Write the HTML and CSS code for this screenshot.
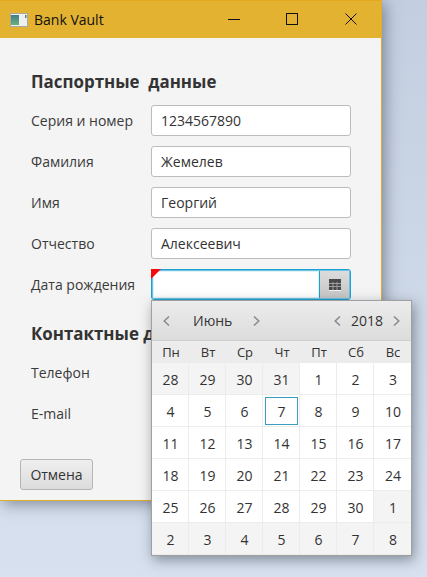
FILE: index.html
```html
<!DOCTYPE html>
<html lang="ru">
<head>
<meta charset="utf-8">
<title>Bank Vault</title>
<link rel="stylesheet" href="styles.css">
</head>
<body>
<div class="window">
  <header class="titlebar">
    <svg class="app-icon" width="18" height="14" viewBox="0 0 18 14">
      <defs><linearGradient id="g" x1="0" y1="0" x2="0" y2="1"><stop offset="0" stop-color="#3f7f86"/><stop offset="1" stop-color="#6fae7a"/></linearGradient></defs>
      <rect x="0.5" y="0.5" width="17" height="13" fill="#eef0f0" stroke="#a9a9a0"/>
      <rect x="1" y="2" width="8" height="10" fill="url(#g)"/>
      <rect x="15" y="2" width="1.5" height="3" fill="#5d7f8a"/>
    </svg>
    <span class="title">Bank Vault</span>
    <div class="controls">
      <svg width="12" height="12" viewBox="0 0 12 12"><path d="M0 6.5H12" stroke="#111" fill="none"/></svg>
      <svg width="12" height="12" viewBox="0 0 12 12"><rect x="0.5" y="0.5" width="11" height="11" stroke="#111" fill="none"/></svg>
      <svg class="close" width="12" height="12" viewBox="0 0 12 12"><path d="M0.5 0.5L11.5 11.5M11.5 0.5L0.5 11.5" stroke="#111" fill="none"/></svg>
    </div>
  </header>
  <main class="content">
    <h2 class="heading first">Паспортные&nbsp; данные</h2>
    <div class="row"><label class="lbl">Серия и номер</label><div class="input">1234567890</div></div>
    <div class="row"><label class="lbl">Фамилия</label><div class="input">Жемелев</div></div>
    <div class="row"><label class="lbl">Имя</label><div class="input">Георгий</div></div>
    <div class="row"><label class="lbl">Отчество</label><div class="input">Алексеевич</div></div>
    <div class="row">
      <label class="lbl">Дата рождения</label>
      <div class="date">
        <div class="date-input"><span class="flag"></span></div>
        <div class="date-btn">
          <svg width="12" height="12" viewBox="0 0 12 12"><rect width="12" height="11" fill="#4a4a4a"/><path d="M0 4.5H12M0 7.5H12M4 3V11M8 3V11" stroke="#9c9c9c" fill="none"/><rect y="11" width="12" height="1" fill="#f4f4f4"/></svg>
        </div>
        <div class="popup">
          <div class="cal-head">
            <div class="spin month"><svg class="arrow" width="7" height="10" viewBox="0 0 7 10"><path d="M6 0.5L1.2 5L6 9.5" stroke="#8a8a8a" stroke-width="1.5" fill="none"/></svg><span>Июнь</span><svg class="arrow" width="7" height="10" viewBox="0 0 7 10"><path d="M1 0.5L5.8 5L1 9.5" stroke="#8a8a8a" stroke-width="1.5" fill="none"/></svg></div>
            <div class="spin year"><svg class="arrow" width="7" height="10" viewBox="0 0 7 10"><path d="M6 0.5L1.2 5L6 9.5" stroke="#8a8a8a" stroke-width="1.5" fill="none"/></svg><span>2018</span><svg class="arrow" width="7" height="10" viewBox="0 0 7 10"><path d="M1 0.5L5.8 5L1 9.5" stroke="#8a8a8a" stroke-width="1.5" fill="none"/></svg></div>
          </div>
          <div class="grid dows"><span>Пн</span><span>Вт</span><span>Ср</span><span>Чт</span><span>Пт</span><span>Сб</span><span>Вс</span></div>
          <div class="grid days">
            <span class="off">28</span><span class="off">29</span><span class="off">30</span><span class="off">31</span><span>1</span><span>2</span><span>3</span>
            <span>4</span><span>5</span><span>6</span><span class="today">7</span><span>8</span><span>9</span><span>10</span>
            <span>11</span><span>12</span><span>13</span><span>14</span><span>15</span><span>16</span><span>17</span>
            <span>18</span><span>19</span><span>20</span><span>21</span><span>22</span><span>23</span><span>24</span>
            <span>25</span><span>26</span><span>27</span><span>28</span><span>29</span><span>30</span><span class="off">1</span>
            <span class="off">2</span><span class="off">3</span><span class="off">4</span><span class="off">5</span><span class="off">6</span><span class="off">7</span><span class="off">8</span>
          </div>
        </div>
      </div>
    </div>
    <h2 class="heading second">Контактные данные</h2>
    <div class="row"><label class="lbl">Телефон</label><div class="input"></div></div>
    <div class="row"><label class="lbl">E-mail</label><div class="input"></div></div>
  </main>
  <footer class="footer"><button class="btn">Отмена</button></footer>
</div>
</body>
</html>
```
FILE: styles.css
```css
* { box-sizing: border-box; }
html, body { height: 100%; }
body {
  margin: 0;
  height: 577px;
  overflow: hidden;
  background: linear-gradient(180deg, #c3cee0 0%, #d7e1ef 100%);
  font-family: "Open Sans", "Noto Sans", sans-serif;
  color: #333;
  font-size: 14px;
}
.window {
  width: 382px;
  height: 501px;
  background: #f4f4f4;
  border-right: 1px solid #e3ab2a;
  border-bottom: 1px solid #e3ab2a;
  box-shadow: 3px 3px 14px rgba(60, 70, 90, .55);
  display: flex;
  flex-direction: column;
}
.titlebar {
  height: 38px;
  flex: none;
  background: #e3b231;
  border-top: 1px solid #e4a91c;
  display: flex;
  align-items: center;
  padding-left: 10px;
  color: #111;
}
.app-icon { flex: none; }
.title { margin-left: 6px; font-size: 14px; }
.controls {
  margin-left: auto;
  display: flex;
  gap: 46px;
  padding: 0 24px 1px 0;
}
.close { margin-left: 1px; }
.content { flex: 1; padding: 0 30px 0 31px; }
.heading { margin: 0; font-size: 16.9px; font-weight: 700; color: #333; line-height: 22px; }
.heading.first { margin-top: 33px; margin-bottom: 12px; }
.heading.second { width: 120px; margin-top: 23px; margin-bottom: 12px; white-space: nowrap; overflow: hidden; }
.row { display: flex; align-items: center; height: 31px; margin-bottom: 10px; }
.lbl { width: 120px; flex: none; font-size: 14px; white-space: nowrap; color: #3a3a3a; }
.input {
  width: 200px;
  height: 31px;
  background: #fff;
  border: 1px solid #bcbcbc;
  border-radius: 3px;
  padding: 0 9px;
  line-height: 29px;
  font-size: 14px;
  color: #333;
}
.date { position: relative; display: flex; width: 200px; height: 31px; border: 1px solid #1ba1d2; border-radius: 3px; box-shadow: inset 0 0 0 1px #6fc3e2; }
.date-input { position: relative; flex: 1; margin: 1px 0 1px 1px; background: #fff; border-right: 1px solid #1ba1d2; box-shadow: inset 0 0 0 1px #e3f2f9; }
.flag {
  position: absolute;
  left: -2px;
  top: -2px;
  width: 0;
  height: 0;
  border-top: 10px solid #f10d0d;
  border-right: 10px solid transparent;
}
.date-btn {
  flex: none;
  width: 29px;
  margin: 1px 1px 1px 0;
  padding-left: 1px;
  background: linear-gradient(180deg, #dcdcdc, #c6c6c6);
  display: flex;
  align-items: center;
  justify-content: center;
}
.popup {
  position: absolute;
  left: -1px;
  top: 30px;
  width: 261px;
  height: 256px;
  border: 1px solid #a0a0a0;
  background: #f4f4f4;
  box-shadow: 2px 4px 12px rgba(50, 55, 70, .5);
  z-index: 2;
}
.cal-head {
  height: 40px;
  display: flex;
  justify-content: space-between;
  align-items: center;
  padding: 0 11px;
  background: linear-gradient(180deg, #ececec, #dcdcdc);
  border-bottom: 1px solid #cfcfcf;
  font-size: 14px;
  color: #333;
}
.spin { display: flex; align-items: center; }
.month span { margin: 0 21px 0 23px; }
.year span { margin: 0 10px; }
.grid { display: grid; grid-template-columns: repeat(7, 37px); }
.dows { height: 22px; background: #ececec; font-size: 13px; }
.dows span { padding-left: 1px; text-align: center; line-height: 22px; }
.days { grid-auto-rows: 32px; background: #fff; }
.days span {
  display: flex;
  align-items: center;
  justify-content: center;
  font-size: 14px;
  padding: 1px 0 0 1px;
  border-right: 1px solid #ececec;
  border-bottom: 1px solid #ececec;
  background: #fff;
}
.days span:nth-child(7n) { border-right: 0; }
.days span.off { background: #f4f4f4; }
.days span.today { position: relative; }
.days span.today::after {
  content: "";
  position: absolute;
  inset: 2px 1px 1px 2px;
  border: 1px solid #3a9dbd;
}
.footer { flex: none; padding: 0 0 10px 20px; }
.btn {
  width: 73px;
  height: 31px;
  padding: 0;
  font: inherit;
  color: #333;
  border: 1px solid #b5b5b5;
  border-radius: 3px;
  background: linear-gradient(180deg, #efefef, #dcdcdc);
}
```
